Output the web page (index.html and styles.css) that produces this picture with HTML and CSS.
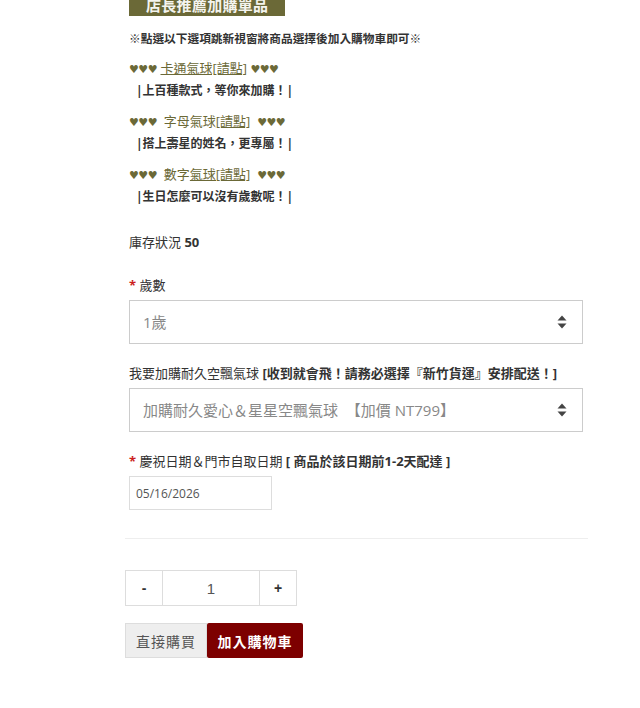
FILE: index.html
```html
<!DOCTYPE html>
<html lang="zh-Hant">
<head>
  <meta charset="UTF-8">
  <title>商品選購</title>
  <link rel="stylesheet" href="styles.css">
</head>
<body>
  <div class="product">
    <!-- Recommended add-ons -->
    <div class="addons">
      <h3 class="addons-title">店長推薦加購單品</h3>
      <p class="addons-note">※點選以下選項跳新視窗將商品選擇後加入購物車即可※</p>

      <div class="addon">
        <p class="addon-name"><span class="hearts">♥♥♥</span> <a href="#">卡通氣球[請點]</a> <span class="hearts">♥♥♥</span></p>
        <p class="addon-desc">|上百種款式，等你來加購！|</p>
      </div>
      <div class="addon">
        <p class="addon-name"><span class="hearts">♥♥♥</span>&nbsp; 字母氣球<a href="#">[請點]</a> &nbsp;<span class="hearts">♥♥♥</span></p>
        <p class="addon-desc">|搭上壽星的姓名，更專屬！|</p>
      </div>
      <div class="addon">
        <p class="addon-name"><span class="hearts">♥♥♥</span>&nbsp; 數字<a href="#">氣球[請點]</a> &nbsp;<span class="hearts">♥♥♥</span></p>
        <p class="addon-desc">|生日怎麼可以沒有歲數呢！|</p>
      </div>
    </div>

    <!-- Options form -->
    <div class="options">
      <p class="stock">庫存狀況 <b>50</b></p>

      <div class="field">
        <label class="field-label"><span class="req">*</span> 歲數</label>
        <div class="select-wrap">
          <select class="select">
            <option>1歲</option>
            <option>2歲</option>
            <option>3歲</option>
          </select>
          <svg class="select-arrow" width="10" height="14" viewBox="0 0 10 14">
            <path d="M5 0.5 L9.5 5.5 H0.5 Z" fill="#444"/>
            <path d="M5 13.5 L9.5 8.5 H0.5 Z" fill="#444"/>
          </svg>
        </div>
      </div>

      <div class="field">
        <label class="field-label">我要加購耐久空飄氣球 <b>[收到就會飛！請務必選擇『新竹貨運』安排配送！]</b></label>
        <div class="select-wrap">
          <select class="select">
            <option>加購耐久愛心＆星星空飄氣球 &nbsp;【加價 NT799】</option>
            <option>不加購</option>
          </select>
          <svg class="select-arrow" width="10" height="14" viewBox="0 0 10 14">
            <path d="M5 0.5 L9.5 5.5 H0.5 Z" fill="#444"/>
            <path d="M5 13.5 L9.5 8.5 H0.5 Z" fill="#444"/>
          </svg>
        </div>
      </div>

      <div class="field">
        <label class="field-label"><span class="req">*</span> 慶祝日期＆門市自取日期 <b>[ 商品於該日期前1-2天配達 ]</b></label>
        <input class="date-input" type="text" value="05/16/2026">
      </div>
    </div>

    <hr class="divider">

    <!-- Quantity + buy buttons -->
    <div class="qty">
      <button class="qty-btn" type="button">-</button>
      <input class="qty-input" type="text" value="1">
      <button class="qty-btn" type="button">+</button>
    </div>

    <div class="actions">
      <button class="btn btn-buy" type="button">直接購買</button>
      <button class="btn btn-cart" type="button">加入購物車</button>
    </div>
  </div>
</body>
</html>
```

FILE: styles.css
```css
:root {
  --olive: #6b6937;
  --text: #333;
  --muted: #888;
  --line: #ccc;
  --red: #cc1f1f;
  --cart: #7d0000;
}
* { box-sizing: border-box; margin: 0; padding: 0; }
body {
  font-family: "Open Sans", "Noto Sans CJK TC", sans-serif;
  color: var(--text);
  background: #fff;
  font-size: 13px;
}
.product {
  width: 463px;
  margin-left: 125px;
  padding-bottom: 48px;
}

.addons { padding-left: 4px; }
.addons-title {
  display: block;
  width: fit-content;
  background: var(--olive);
  color: #f4f4ee;
  font-size: 15px;
  font-weight: bold;
  line-height: 22px;
  height: 22px;
  padding: 0 17px;
  margin-top: -6px;
  letter-spacing: 0.3px;
}
.addons-note {
  margin-top: 12px;
  font-size: 11.7px;
  font-weight: bold;
  line-height: 20px;
  color: #333;
}
.addons-note + .addon { margin-top: 10px; }
.addon { margin-bottom: 10px; }
.addon-name {
  line-height: 20px;
  font-size: 13px;
  color: var(--olive);
}
.addon-name a { color: var(--olive); text-decoration: underline; }
.hearts { font-family: "DejaVu Sans", sans-serif; font-size: 11px; letter-spacing: -0.5px; }
.addon-desc {
  margin-top: 1px;
  padding-left: 7px;
  line-height: 20px;
  font-size: 12px;
  font-weight: bold;
  color: #333;
}

/* Options */
.options { padding: 0 5px 0 4px; }
.stock { margin-top: 25px; line-height: 20px; }
.stock b { font-weight: bold; }
.field { margin-top: 23px; }
.field + .field { margin-top: 19px; }
.field-label { display: block; line-height: 20px; margin-bottom: 5px; }
.field-label b { font-weight: bold; }
.req { color: var(--red); font-weight: bold; }
.select-wrap { position: relative; }
.select {
  -webkit-appearance: none;
  appearance: none;
  display: block;
  width: 100%;
  height: 44px;
  border: 1px solid var(--line);
  border-radius: 0;
  background: #fff;
  padding: 0 40px 0 13px;
  font: 15px "Open Sans", "Noto Sans CJK TC", sans-serif;
  color: var(--muted);
  outline: none;
}
.select-arrow {
  position: absolute;
  right: 16px;
  top: 15px;
}
.date-input {
  display: block;
  width: 143px;
  height: 34px;
  border: 1px solid #ddd;
  padding: 0 6px;
  font: 12px "Open Sans", sans-serif;
  color: #555;
  outline: none;
}

.divider {
  border: 0;
  border-top: 1px solid #eee;
  margin: 28px 0 31px;
}

/* Quantity */
.qty { display: flex; height: 36px; }
.qty-btn {
  width: 38px;
  border: 1px solid #ddd;
  background: #fff;
  font: bold 14px "Liberation Sans", sans-serif;
  color: #333;
}
.qty-input {
  width: 96px;
  border: 1px solid #ddd;
  border-left: 0;
  border-right: 0;
  text-align: center;
  font: 15px "Liberation Sans", sans-serif;
  color: #555;
  outline: none;
}

.actions { display: flex; margin-top: 17px; }
.btn {
  height: 35px;
  border: 1px solid transparent;
  font: 14px "Noto Sans CJK TC", sans-serif;
  letter-spacing: 1px;
}
.btn-buy {
  width: 82px;
  background: #eee;
  border-color: #ddd;
  color: #555;
}
.btn-cart {
  width: 96px;
  background: var(--cart);
  color: #fff;
  font-weight: bold;
  border-radius: 2px;
}
```
